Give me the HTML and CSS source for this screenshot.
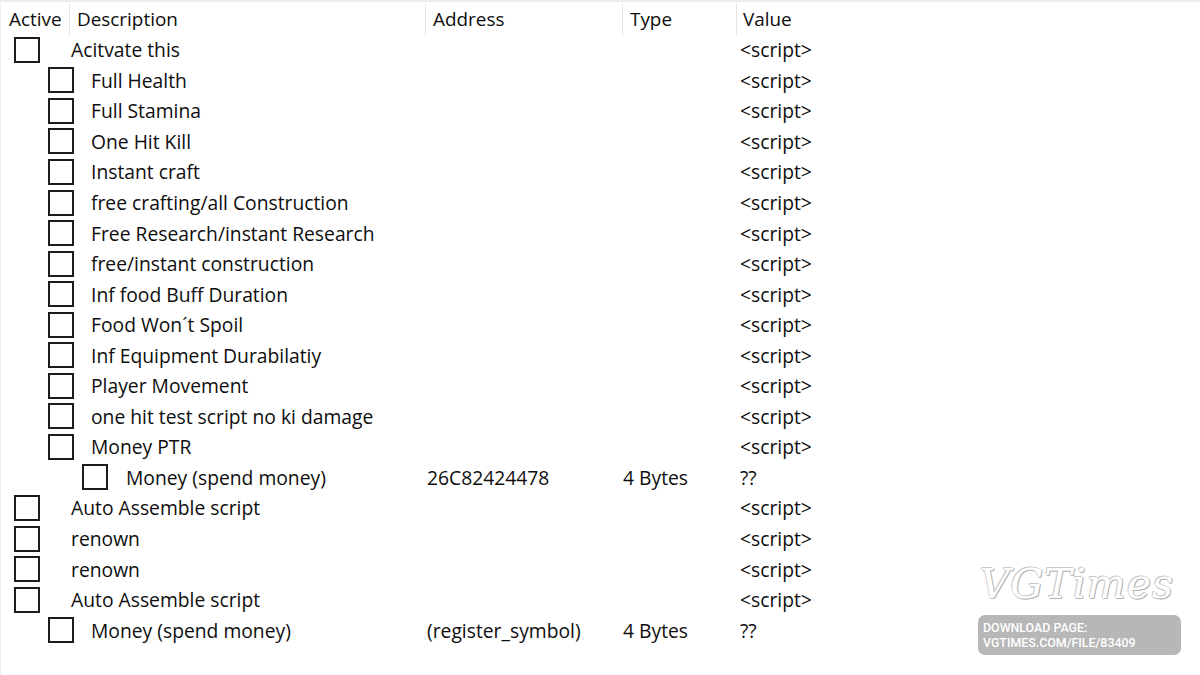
FILE: index.html
```html
<!DOCTYPE html>
<html>
<head>
<meta charset="utf-8">
<link rel="stylesheet" href="styles.css">
</head>
<body>
<div class="window">
  <div class="header">
    <div class="hcell h-active">Active</div>
    <div class="hcell h-desc">Description</div>
    <div class="hcell h-addr">Address</div>
    <div class="hcell h-type">Type</div>
    <div class="hcell h-value">Value</div>
  </div>
  <div class="rows">
    <div class="row l0"><div class="tree"><span class="cb"></span><span class="desc">Acitvate this</span></div><div class="addr"></div><div class="type"></div><div class="value">&lt;script&gt;</div></div>
    <div class="row l1"><div class="tree"><span class="cb"></span><span class="desc">Full Health</span></div><div class="addr"></div><div class="type"></div><div class="value">&lt;script&gt;</div></div>
    <div class="row l1"><div class="tree"><span class="cb"></span><span class="desc">Full Stamina</span></div><div class="addr"></div><div class="type"></div><div class="value">&lt;script&gt;</div></div>
    <div class="row l1"><div class="tree"><span class="cb"></span><span class="desc">One Hit Kill</span></div><div class="addr"></div><div class="type"></div><div class="value">&lt;script&gt;</div></div>
    <div class="row l1"><div class="tree"><span class="cb"></span><span class="desc">Instant craft</span></div><div class="addr"></div><div class="type"></div><div class="value">&lt;script&gt;</div></div>
    <div class="row l1"><div class="tree"><span class="cb"></span><span class="desc">free crafting/all Construction</span></div><div class="addr"></div><div class="type"></div><div class="value">&lt;script&gt;</div></div>
    <div class="row l1"><div class="tree"><span class="cb"></span><span class="desc">Free Research/instant Research</span></div><div class="addr"></div><div class="type"></div><div class="value">&lt;script&gt;</div></div>
    <div class="row l1"><div class="tree"><span class="cb"></span><span class="desc">free/instant construction</span></div><div class="addr"></div><div class="type"></div><div class="value">&lt;script&gt;</div></div>
    <div class="row l1"><div class="tree"><span class="cb"></span><span class="desc">Inf food Buff Duration</span></div><div class="addr"></div><div class="type"></div><div class="value">&lt;script&gt;</div></div>
    <div class="row l1"><div class="tree"><span class="cb"></span><span class="desc">Food Won´t Spoil</span></div><div class="addr"></div><div class="type"></div><div class="value">&lt;script&gt;</div></div>
    <div class="row l1"><div class="tree"><span class="cb"></span><span class="desc">Inf Equipment Durabilatiy</span></div><div class="addr"></div><div class="type"></div><div class="value">&lt;script&gt;</div></div>
    <div class="row l1"><div class="tree"><span class="cb"></span><span class="desc">Player Movement</span></div><div class="addr"></div><div class="type"></div><div class="value">&lt;script&gt;</div></div>
    <div class="row l1"><div class="tree"><span class="cb"></span><span class="desc">one hit test script no ki damage</span></div><div class="addr"></div><div class="type"></div><div class="value">&lt;script&gt;</div></div>
    <div class="row l1"><div class="tree"><span class="cb"></span><span class="desc">Money PTR</span></div><div class="addr"></div><div class="type"></div><div class="value">&lt;script&gt;</div></div>
    <div class="row l2"><div class="tree"><span class="cb"></span><span class="desc">Money (spend money)</span></div><div class="addr">26C82424478</div><div class="type">4 Bytes</div><div class="value">??</div></div>
    <div class="row l0"><div class="tree"><span class="cb"></span><span class="desc">Auto Assemble script</span></div><div class="addr"></div><div class="type"></div><div class="value">&lt;script&gt;</div></div>
    <div class="row l0"><div class="tree"><span class="cb"></span><span class="desc">renown</span></div><div class="addr"></div><div class="type"></div><div class="value">&lt;script&gt;</div></div>
    <div class="row l0"><div class="tree"><span class="cb"></span><span class="desc">renown</span></div><div class="addr"></div><div class="type"></div><div class="value">&lt;script&gt;</div></div>
    <div class="row l0"><div class="tree"><span class="cb"></span><span class="desc">Auto Assemble script</span></div><div class="addr"></div><div class="type"></div><div class="value">&lt;script&gt;</div></div>
    <div class="row l1"><div class="tree"><span class="cb"></span><span class="desc">Money (spend money)</span></div><div class="addr">(register_symbol)</div><div class="type">4 Bytes</div><div class="value">??</div></div>
  </div>
  <div class="watermark">
    <div class="wm-logo">VGTimes</div>
    <div class="wm-box">DOWNLOAD PAGE:<br>VGTIMES.COM/FILE/83409</div>
  </div>
</div>
</body>
</html>
```

FILE: styles.css
```css
html, body {
  margin: 0;
  padding: 0;
  background: #fff;
}
body {
  width: 1200px;
  height: 675px;
  overflow: hidden;
  font-family: "Open Sans", "Noto Sans", "Liberation Sans", sans-serif;
  color: #0e0e0e;
}
.window {
  position: relative;
  width: 1200px;
  height: 675px;
  box-sizing: border-box;
  border-top: 2px solid #ececec;
  border-left: 1px solid #f0f0f0;
}
.header {
  display: flex;
  height: 33px;
}
.hcell {
  font-size: 18.9px;
  height: 31px;
  line-height: 31px;
  margin-top: 2px;
  box-sizing: border-box;
  border-right: 1px solid #e3e3e3;
  padding-left: 7px;
}
.h-active { width: 69px; padding-left: 8px; }
.h-desc { width: 356px; }
.h-addr { width: 197px; }
.h-type { width: 114px; }
.h-value { border-right: none; padding-left: 6px; flex: 1; }

.rows {
  display: flex;
  flex-direction: column;
  margin-top: -0.5px;
}
.row {
  display: flex;
  align-items: center;
  height: 30.56px;
  font-size: 19.3px;
}
.tree {
  width: 426px;
  display: flex;
  align-items: center;
}
.cb {
  width: 26px;
  height: 26px;
  box-sizing: border-box;
  border: 2px solid #1c1c1c;
  background: #fff;
  flex: none;
}
.l0 .cb { margin-left: 13px; }
.l0 .desc { margin-left: 31px; }
.l1 .cb { margin-left: 47px; }
.l1 .desc { margin-left: 17px; }
.l2 .cb { margin-left: 81px; }
.l2 .desc { margin-left: 18px; }
.desc, .addr, .type, .value {
  white-space: nowrap;
}
.addr { width: 196px; }
.type { width: 117px; }
.value { flex: 1; }

.watermark {
  position: absolute;
  left: 977px;
  top: 558px;
  width: 203px;
}
.wm-logo {
  font-family: "DejaVu Serif", serif;
  font-style: italic;
  font-size: 41px;
  line-height: 48px;
  color: #fff;
  letter-spacing: 1px;
  padding-left: 2px;
  text-shadow: -1px -1px 0 #c9c9c9, 1px 1px 0 #b4b4b4, 1px 0 0 #c4c4c4, 0 1px 0 #c4c4c4;
}
.wm-box {
  margin-top: 7px;
  background: #b7b7b7;
  border-radius: 7px;
  color: #fff;
  font-family: "Roboto", "Liberation Sans", sans-serif;
  font-weight: 500;
  font-size: 12.4px;
  line-height: 15px;
  padding: 5px 5px 4px 5px;
  height: 40px;
  box-sizing: border-box;
}
```
